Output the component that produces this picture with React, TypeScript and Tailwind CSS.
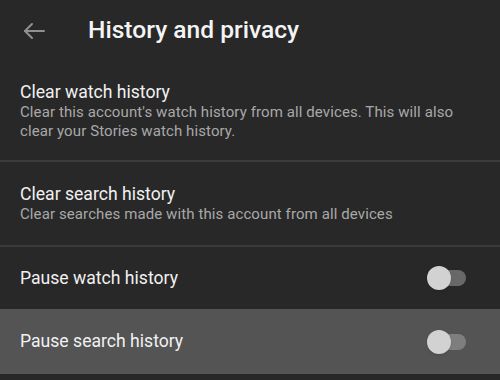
const BackArrow = () => (
  <svg width="22" height="18" viewBox="0 0 22 18" fill="none" stroke="#909090" strokeWidth="2" strokeLinecap="round" strokeLinejoin="round">
    <path d="M21 9H2" />
    <path d="M9 2L2 9l7 7" />
  </svg>
);

const Toggle = ({ track }: { track: string }) => (
  <div className="relative w-[40px] h-[26px] flex items-center">
    <div className={`absolute left-[14px] w-[25px] h-[16px] rounded-full ${track}`} />
    <div className="absolute left-0 w-[24px] h-[24px] rounded-full bg-[#d2d2d2] shadow" />
  </div>
);

const ClearRow = ({ title, desc, className }: { title: string; desc: string; className: string }) => (
  <div className={`px-5 border-b-2 border-[#3b3b3b] ${className}`}>
    <div className="text-[17.6px] leading-[22px] text-[#f1f1f1]">{title}</div>
    <div className="text-[15px] leading-[19px] tracking-[0.1px] text-[#a8a8a8]">{desc}</div>
  </div>
);

const ToggleRow = ({ title, highlighted }: { title: string; highlighted?: boolean }) => (
  <div
    className={`pl-5 pr-[33px] flex items-center justify-between ${
      highlighted ? "h-[65px] bg-[#545454]" : "h-[62px]"
    }`}
  >
    <span className="text-[17.6px] text-[#f1f1f1]">{title}</span>
    <Toggle track={highlighted ? "bg-[#7e7e7e]" : "bg-[#686868]"} />
  </div>
);

export default function App() {
  return (
    <div
      className="w-[500px] h-[380px] overflow-hidden bg-[#282828]"
      style={{ fontFamily: "Roboto, 'Noto Sans', sans-serif" }}
    >
      <div className="h-[60px] flex items-center">
        <div className="w-[88px] pl-[23px] pt-[2px]">
          <BackArrow />
        </div>
        <h1 className="text-[24.6px] font-medium text-[#f4f4f4]">History and privacy</h1>
      </div>
      <ClearRow
        className="pt-[21px] pb-[19px]"
        title="Clear watch history"
        desc="Clear this account's watch history from all devices. This will also clear your Stories watch history."
      />
      <ClearRow
        className="pt-[21px] pb-[21px]"
        title="Clear search history"
        desc="Clear searches made with this account from all devices"
      />
      <ToggleRow title="Pause watch history" />
      <ToggleRow title="Pause search history" highlighted />
    </div>
  );
}
